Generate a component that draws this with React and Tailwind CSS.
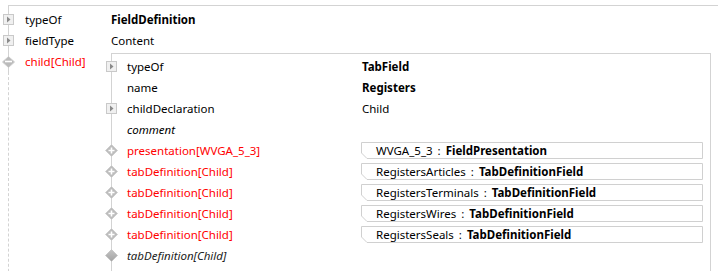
import React from "react";

const LINE = "border-[#d3d3d3]";

const ExpandIcon = () => (
  <svg width="11" height="11" viewBox="0 0 11 11" className="shrink-0">
    <rect x="0.5" y="0.5" width="10" height="10" fill="#f0f0f0" stroke="#c9c9c9" />
    <path d="M4 2.5 L7.5 5.5 L4 8.5 Z" fill="#8a8a8a" />
  </svg>
);

const DiamondPlus = () => (
  <svg width="13" height="13" viewBox="0 0 13 13" className="shrink-0">
    <path d="M6.5 0.5 L12.5 6.5 L6.5 12.5 L0.5 6.5 Z" fill="#bdbdbd" stroke="#cfcfcf" />
    <path d="M6.5 3.5 V9.5 M3.5 6.5 H9.5" stroke="#ffffff" strokeWidth="1.6" />
  </svg>
);

const Diamond = () => (
  <svg width="13" height="13" viewBox="0 0 13 13" className="shrink-0">
    <defs>
      <linearGradient id="dg" x1="0" y1="0" x2="0" y2="1">
        <stop offset="0" stopColor="#c4c4c4" />
        <stop offset="1" stopColor="#a3a3a3" />
      </linearGradient>
    </defs>
    <path d="M6.5 0.5 L12.5 6.5 L6.5 12.5 L0.5 6.5 Z" fill="url(#dg)" stroke="#c8c8c8" />
  </svg>
);

const DiamondMinus = () => (
  <svg width="13" height="12" viewBox="0 0 13 12" className="shrink-0">
    <path d="M6.5 0.5 L12.5 6 L6.5 11.5 L0.5 6 Z" fill="#bbbbbb" stroke="#cdcdcd" />
    <path d="M3 5.5 H10" stroke="#ffffff" strokeWidth="1.6" />
  </svg>
);

const icons = {
  expand: <ExpandIcon />,
  plus: <DiamondPlus />,
  diamond: <Diamond />,
  minus: <DiamondMinus />,
};

const TypeBox = ({ name, type }) => (
  <div className="relative h-[17px] w-[342px] -ml-[1px] flex items-center pl-[15px] whitespace-nowrap">
    <svg width="342" height="17" className="absolute left-0 top-0">
      <path d="M0.5 0.5 H341.5 V16.5 H6 L0.5 11 Z" fill="none" stroke="#d0d0d0" />
    </svg>
    {name && (
      <>
        <span className="relative">{name}</span>
        <span className="relative mx-[5px]">:</span>
        <span className="relative font-bold">{type}</span>
      </>
    )}
  </div>
);

const Row = ({ icon, label, labelClass = "", labelGap = "ml-[10px]", labelWidth, value, bold, children }) => (
  <div className="flex items-center h-[21px]">
    <div className="w-[13px] -ml-[7px] flex justify-center">{icon && icons[icon]}</div>
    <div className={`${labelGap} whitespace-nowrap ${labelClass}`} style={{ width: labelWidth }}>
      {label}
    </div>
    {value && <div className={bold ? "font-bold" : ""}>{value}</div>}
    {children}
  </div>
);

export default function App() {
  const innerRows = [
    { icon: "expand", label: "typeOf", value: "TabField", bold: true },
    { label: "name", value: "Registers", bold: true },
    { icon: "expand", label: "childDeclaration", value: "Child" },
    { label: "comment", labelClass: "italic" },
    { icon: "plus", label: "presentation[WVGA_5_3]", labelClass: "text-[#ff0000]", box: ["WVGA_5_3", "FieldPresentation"] },
    { icon: "plus", label: "tabDefinition[Child]", labelClass: "text-[#ff0000]", box: ["RegistersArticles", "TabDefinitionField"] },
    { icon: "plus", label: "tabDefinition[Child]", labelClass: "text-[#ff0000]", box: ["RegistersTerminals", "TabDefinitionField"] },
    { icon: "plus", label: "tabDefinition[Child]", labelClass: "text-[#ff0000]", box: ["RegistersWires", "TabDefinitionField"] },
    { icon: "plus", label: "tabDefinition[Child]", labelClass: "text-[#ff0000]", box: ["RegistersSeals", "TabDefinitionField"] },
    { icon: "diamond", label: "tabDefinition[Child]", labelClass: "italic text-[#222]" },
    { label: "", box: ["", ""] },
  ];

  return (
    <div
      className="w-[718px] h-[271px] overflow-hidden bg-white text-[11.5px] text-black pt-[5px]"
      style={{ fontFamily: '"Noto Sans", "Open Sans", sans-serif' }}
    >
      <div className={`ml-[8px] border-t ${LINE}`}>
        {/* top level properties */}
        <div className={`border-l ${LINE} pt-[3px]`}>
          <Row icon="expand" label="typeOf" labelWidth={86} value="FieldDefinition" bold />
          <Row icon="expand" label="fieldType" labelWidth={86} value="Content" />
        </div>

        {/* child[Child] with its nested block */}
        <div className="flex items-stretch">
          <div className="flex flex-col">
            <div className={`border-l ${LINE} h-[21px]`}>
              <Row icon="minus" label="child[Child]" labelClass="text-[#ff0000]" labelWidth={86} />
            </div>
            <div className={`flex-1 border-l border-dashed ${LINE}`} />
          </div>

          <div className={`flex-1 mr-[7px] mt-[2px] border-t border-l border-r ${LINE} pt-[2px]`}>
            {innerRows.map((r, i) => (
              <Row
                key={i}
                icon={r.icon}
                label={r.label}
                labelClass={r.labelClass}
                labelGap="ml-[9px]"
                labelWidth={235}
                value={r.value}
                bold={r.bold}
              >
                {r.box && (
                  <div className={r.box[0] ? "" : "mt-[5px]"}>
                    <TypeBox name={r.box[0]} type={r.box[1]} />
                  </div>
                )}
              </Row>
            ))}
          </div>
        </div>
      </div>
    </div>
  );
}
